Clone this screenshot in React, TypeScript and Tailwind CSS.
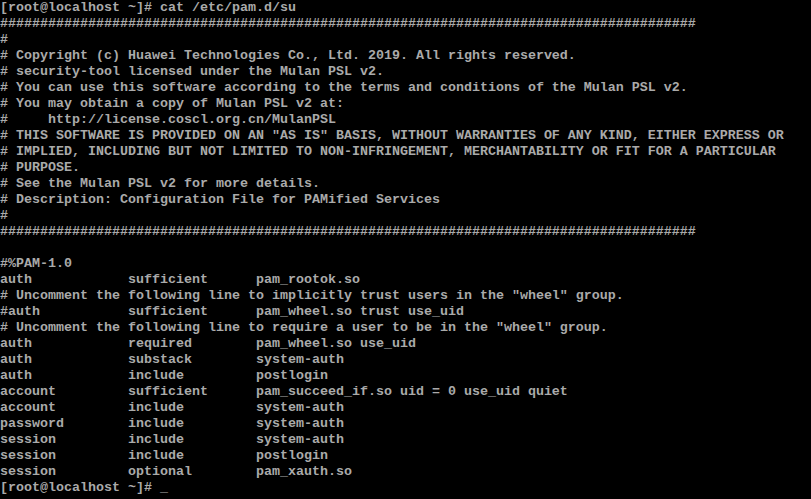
const HASHES = "#".repeat(87);

const row = (a: string, b: string, c: string) => a.padEnd(16) + b.padEnd(16) + c;

const LINES: string[] = [
  "[root@localhost ~]# cat /etc/pam.d/su",
  HASHES,
  "#",
  "# Copyright (c) Huawei Technologies Co., Ltd. 2019. All rights reserved.",
  "# security-tool licensed under the Mulan PSL v2.",
  "# You can use this software according to the terms and conditions of the Mulan PSL v2.",
  "# You may obtain a copy of Mulan PSL v2 at:",
  "#     http://license.coscl.org.cn/MulanPSL",
  '# THIS SOFTWARE IS PROVIDED ON AN "AS IS" BASIS, WITHOUT WARRANTIES OF ANY KIND, EITHER EXPRESS OR',
  "# IMPLIED, INCLUDING BUT NOT LIMITED TO NON-INFRINGEMENT, MERCHANTABILITY OR FIT FOR A PARTICULAR",
  "# PURPOSE.",
  "# See the Mulan PSL v2 for more details.",
  "# Description: Configuration File for PAMified Services",
  "#",
  HASHES,
  "",
  "#%PAM-1.0",
  row("auth", "sufficient", "pam_rootok.so"),
  '# Uncomment the following line to implicitly trust users in the "wheel" group.',
  row("#auth", "sufficient", "pam_wheel.so trust use_uid"),
  '# Uncomment the following line to require a user to be in the "wheel" group.',
  row("auth", "required", "pam_wheel.so use_uid"),
  row("auth", "substack", "system-auth"),
  row("auth", "include", "postlogin"),
  row("account", "sufficient", "pam_succeed_if.so uid = 0 use_uid quiet"),
  row("account", "include", "system-auth"),
  row("password", "include", "system-auth"),
  row("session", "include", "system-auth"),
  row("session", "include", "postlogin"),
  row("session", "optional", "pam_xauth.so"),
];

export default function App() {
  return (
    <div className="w-[811px] h-[499px] bg-black overflow-hidden text-[#aaaaaa] font-['Liberation_Mono',monospace] text-[13.33px] font-bold">
      {LINES.map((line, i) => (
        <div key={i} className="h-4 leading-4 whitespace-pre">
          {line}
        </div>
      ))}
      <div className="h-4 leading-4 whitespace-pre">
        [root@localhost ~]# <span className="inline-block w-2">_</span>
      </div>
    </div>
  );
}
